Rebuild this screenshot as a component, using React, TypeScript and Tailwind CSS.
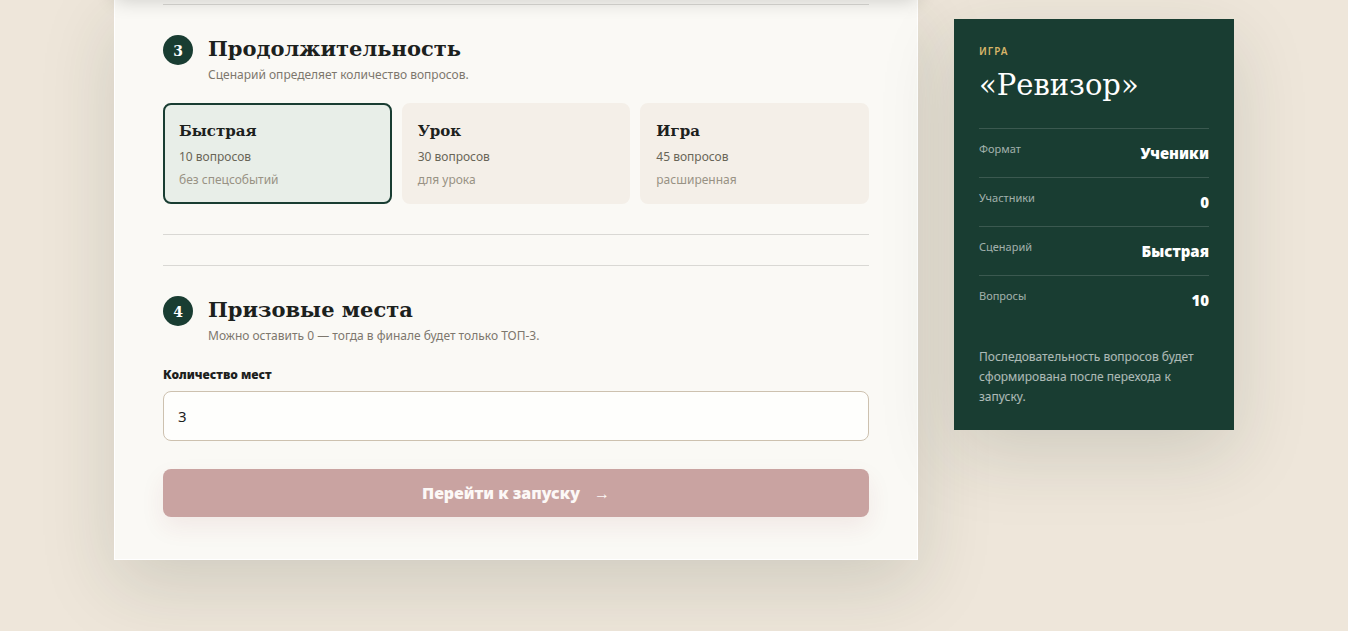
import { useState } from 'react';
import type { ReactNode } from 'react';

interface Scenario {
  id: string;
  title: string;
  questions: number;
  note: string;
}

const scenarios: Scenario[] = [
  { id: 'fast', title: 'Быстрая', questions: 10, note: 'без спецсобытий' },
  { id: 'lesson', title: 'Урок', questions: 30, note: 'для урока' },
  { id: 'game', title: 'Игра', questions: 45, note: 'расширенная' },
];

interface StepHeadingProps {
  number: number;
  title: string;
  children: ReactNode;
}

function StepHeading({ number, title, children }: StepHeadingProps) {
  return (
    <div className="flex items-start gap-[15px]">
      <span className="flex size-[30px] shrink-0 items-center justify-center rounded-full bg-[#193d32] pt-0.5 font-['DejaVu_Serif',serif] text-sm font-bold text-white">
        {number}
      </span>
      <div>
        <h2 className="font-['DejaVu_Serif',serif] text-[21px] leading-7 font-bold">{title}</h2>
        <p className="mt-0.5 text-xs leading-5 text-[#7d776d]">{children}</p>
      </div>
    </div>
  );
}

function SummaryRow({ label, value }: { label: string; value: string | number }) {
  return (
    <div className="flex h-[49px] justify-between border-t border-white/15 pt-3">
      <dt className="text-[11px] leading-4 text-white/60">{label}</dt>
      <dd className="text-[15px] leading-6 font-black">{value}</dd>
    </div>
  );
}

export default function App() {
  const [selected, setSelected] = useState('fast');
  const [places, setPlaces] = useState('3');
  const scenario = scenarios.find((s) => s.id === selected) ?? scenarios[0];

  return (
    <div className="min-h-screen overflow-hidden bg-[#eee6da] px-6 pb-[71px] font-['Noto_Sans',sans-serif] text-[#1c211d]">
      <div className="mx-auto flex max-w-[1120px] items-start gap-9">
        <main className="min-w-0 flex-1 border-x border-b border-white bg-[#faf9f5] px-12 pb-[42px] shadow-[0_24px_70px_rgba(36,54,40,0.15)]">
          {/* Shadow of the bar above the form */}
          <div className="pointer-events-none relative -mx-12 -mt-5 mb-1 h-5 shadow-[0_0_20px_rgba(0,0,0,0.2)]" />
          <section className="border-y border-[#d9d8d4] py-[30px]">
            <StepHeading number={3} title="Продолжительность">
              Сценарий определяет количество вопросов.
            </StepHeading>
            <div className="mt-[18px] grid grid-cols-3 gap-2.5">
              {scenarios.map((s) => (
                <button
                  key={s.id}
                  type="button"
                  aria-pressed={s.id === selected}
                  onClick={() => setSelected(s.id)}
                  className={`flex h-[101px] flex-col items-start rounded-lg border-2 px-3.5 pt-3.5 text-left ${
                    s.id === selected ? 'border-[#193d32] bg-[#e8eee8]' : 'border-[#f4efe8] bg-[#f4efe8]'
                  }`}
                >
                  <strong className="font-['DejaVu_Serif',serif] text-[15px] leading-6 font-bold">{s.title}</strong>
                  <span className="mt-1 text-xs leading-5 text-[#686557]">{s.questions} вопросов</span>
                  <span className="mt-[3px] text-xs leading-5 text-[#989284]">{s.note}</span>
                </button>
              ))}
            </div>
          </section>

          <section className="mt-[30px] border-t border-[#d9d8d4] pt-[30px]">
            <StepHeading number={4} title="Призовые места">
              Можно оставить 0 — тогда в финале будет только ТОП-3.
            </StepHeading>
            <label htmlFor="places" className="mt-[21px] block text-xs leading-4 font-black">
              Количество мест
            </label>
            <input
              id="places"
              value={places}
              onChange={(e) => setPlaces(e.target.value)}
              className="mt-2 block h-[50px] w-full rounded-lg border border-[#cdc1af] bg-[#fefefc] px-3.5 text-[15px] outline-none"
            />
            <button
              type="button"
              className="mt-7 flex h-12 w-full items-center justify-center gap-3.5 rounded-lg bg-[#c9a3a1] text-base font-black text-[#fcf8f6] shadow-[0_10px_24px_rgba(138,38,48,0.08)]"
            >
              Перейти к запуску
              <span className="font-normal">→</span>
            </button>
          </section>
        </main>

        <aside className="mt-[19px] w-[280px] shrink-0 bg-[#193d32] px-[25px] pt-6 pb-[23px] text-white shadow-[0_24px_70px_rgba(36,54,40,0.15)]">
          <p className="text-[10px] leading-4 font-semibold tracking-widest text-[#d6b569]">ИГРА</p>
          <h2 className="mt-2 font-['DejaVu_Serif',serif] text-[29px] leading-9 font-normal">«Ревизор»</h2>
          <dl className="mt-[25px]">
            <SummaryRow label="Формат" value="Ученики" />
            <SummaryRow label="Участники" value={0} />
            <SummaryRow label="Сценарий" value={scenario.title} />
            <SummaryRow label="Вопросы" value={scenario.questions} />
          </dl>
          <p className="mt-[23px] text-xs leading-5 text-white/65">
            Последовательность вопросов будет сформирована после перехода к запуску.
          </p>
        </aside>
      </div>
    </div>
  );
}
